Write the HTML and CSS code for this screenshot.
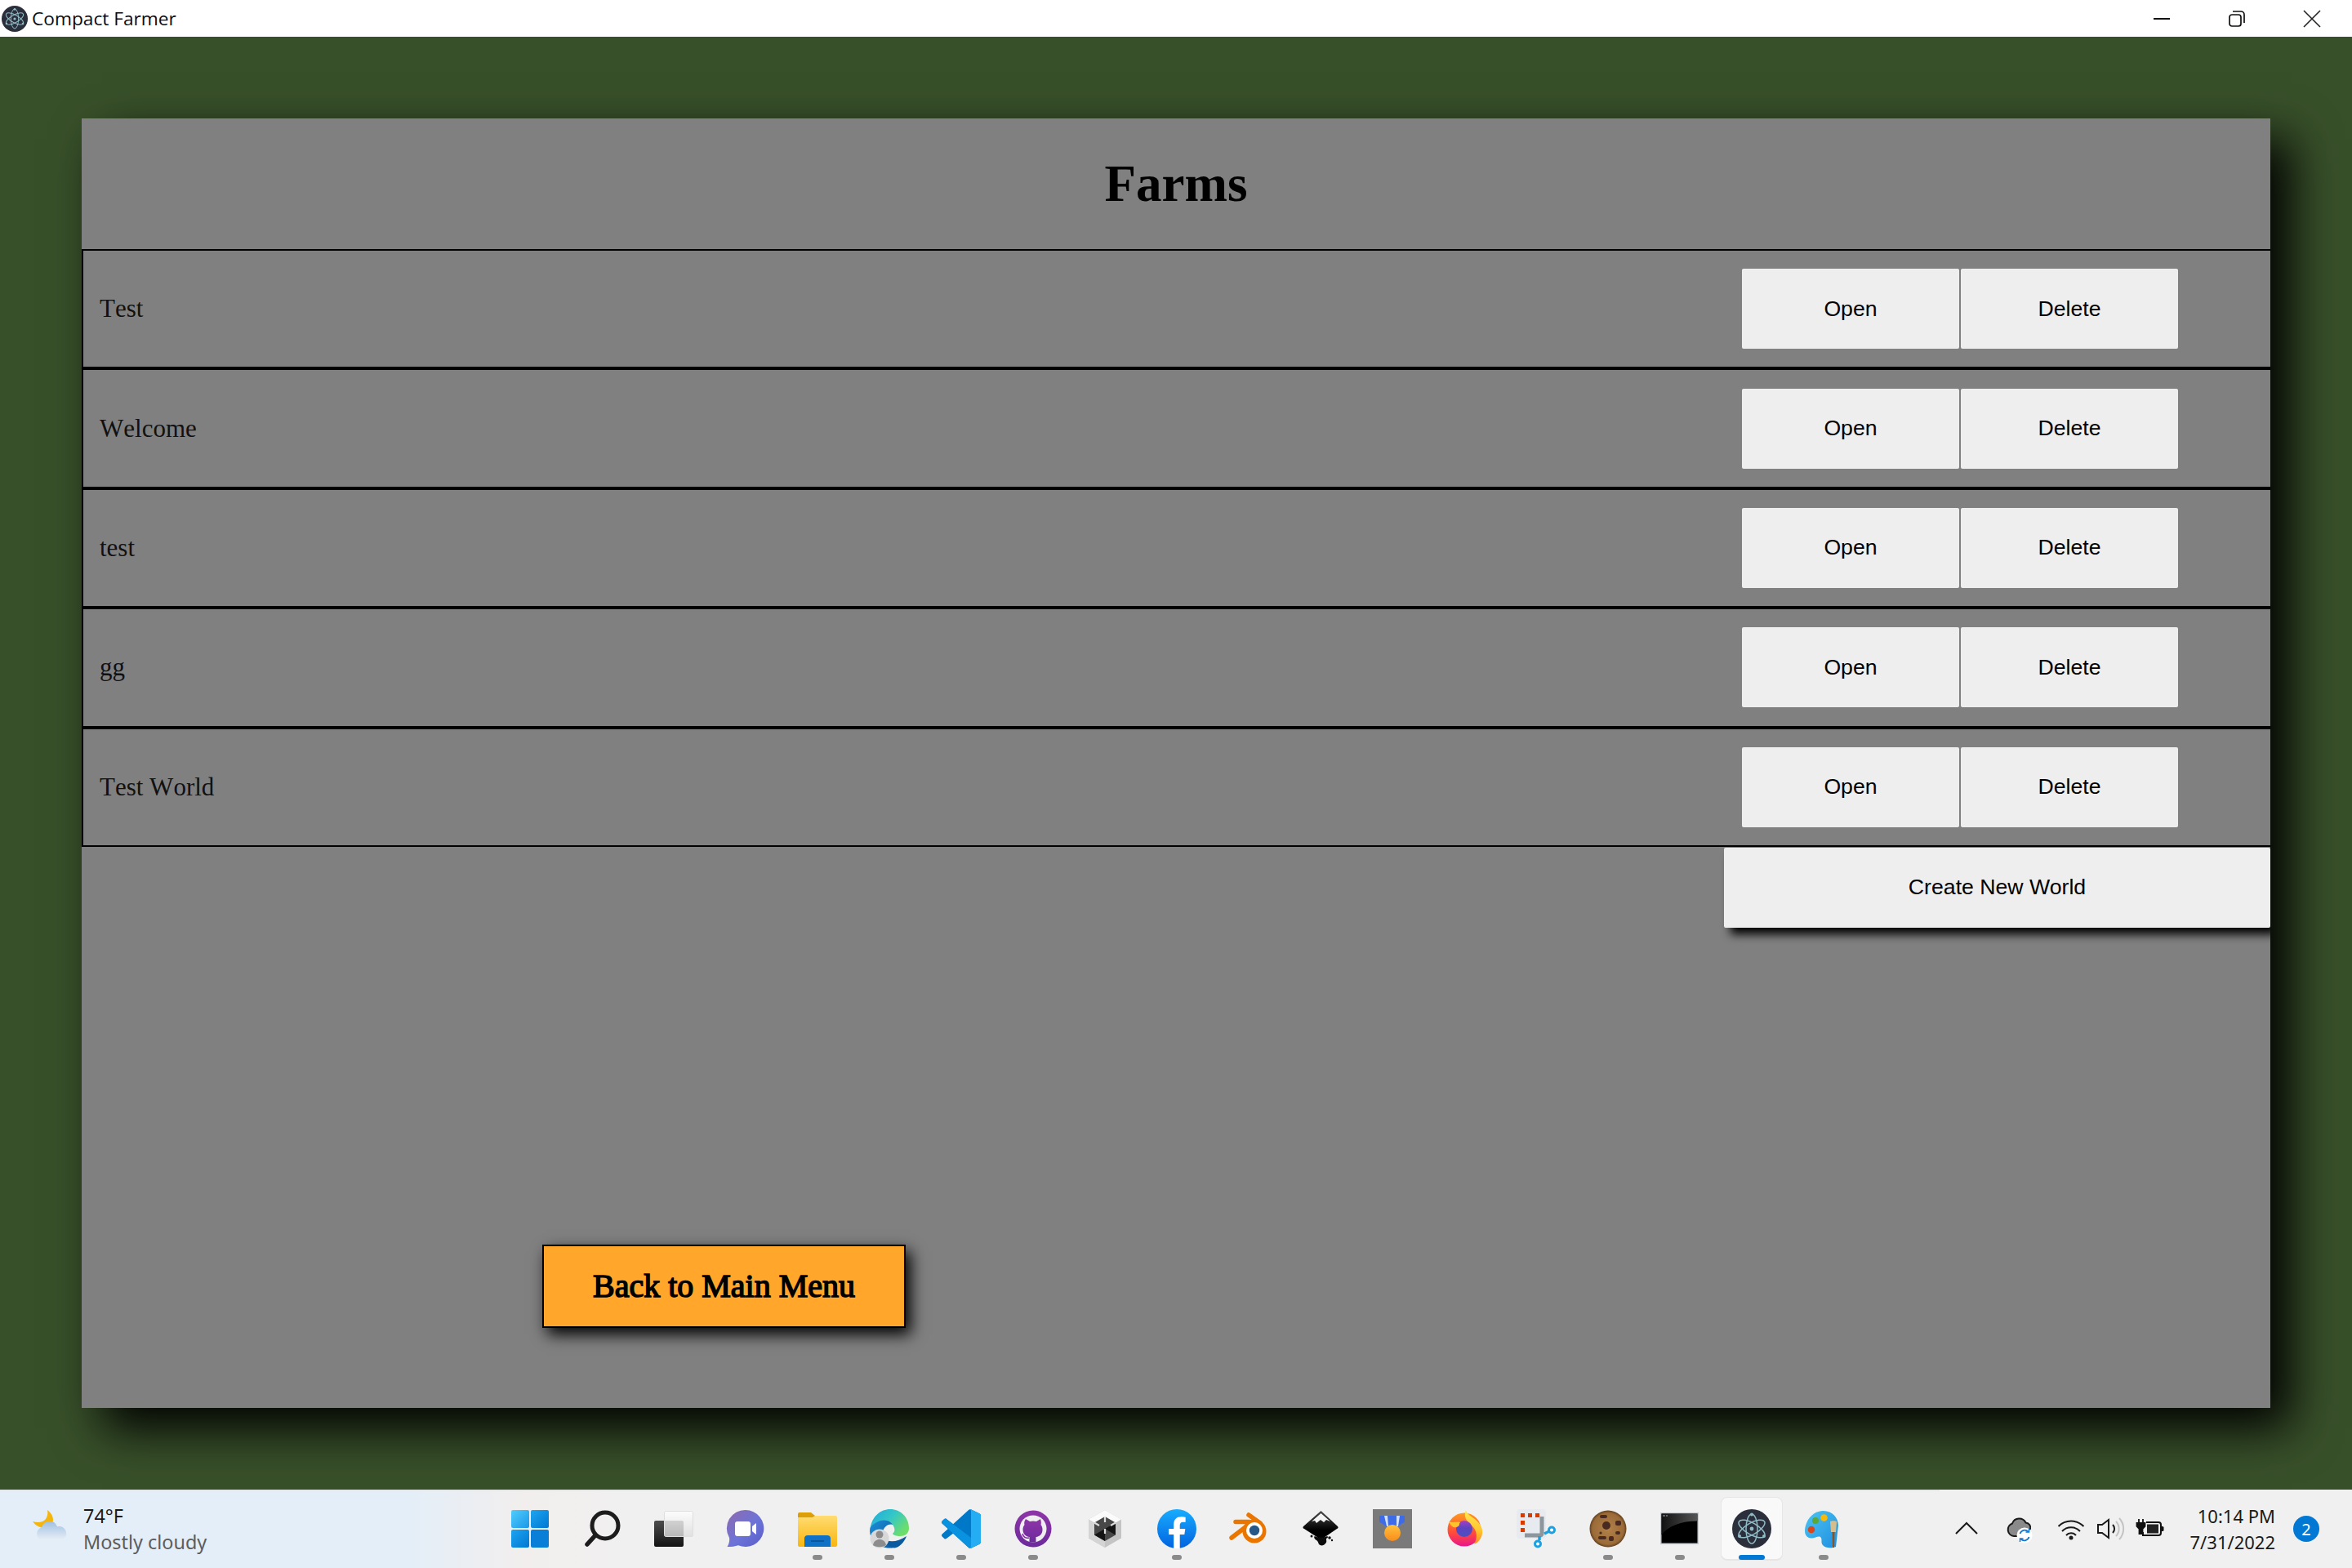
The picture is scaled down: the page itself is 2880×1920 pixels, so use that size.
FILE: index.html
```html
<!DOCTYPE html>
<html lang="en">
<head>
  <meta charset="UTF-8">
  <title>Compact Farmer</title>
  <link rel="stylesheet" href="styles.css">
</head>
<body>

  <svg class="defs" width="0" height="0">
    <defs>
      <symbol id="electron" viewBox="0 0 48 48">
        <circle cx="24" cy="24" r="24" fill="#2b2e3b"/>
        <g fill="none" stroke="#8fbcc6" stroke-width="1.500">
          <ellipse cx="24" cy="24" rx="18" ry="7" transform="rotate(30 24 24)"/>
          <ellipse cx="24" cy="24" rx="18" ry="7" transform="rotate(90 24 24)"/>
          <ellipse cx="24" cy="24" rx="18" ry="7" transform="rotate(150 24 24)"/>
        </g>
        <circle cx="24" cy="24" r="2.400" fill="#8fbcc6"/>
        <circle cx="24" cy="6.500" r="2" fill="#8fbcc6"/>
        <circle cx="9" cy="33" r="2" fill="#8fbcc6"/>
        <circle cx="39" cy="33" r="2" fill="#8fbcc6"/>
      </symbol>
      <linearGradient id="winA" x1="0" y1="0" x2="1" y2="1"><stop offset="0" stop-color="#52cdfd"/><stop offset="1" stop-color="#1a98e8"/></linearGradient>
      <linearGradient id="winB" x1="0" y1="0" x2="1" y2="1"><stop offset="0" stop-color="#1ea5ee"/><stop offset="1" stop-color="#0078d4"/></linearGradient>
      <linearGradient id="tv" x1="0" y1="0" x2="0" y2="1"><stop offset="0" stop-color="#4d4d4d"/><stop offset="1" stop-color="#141414"/></linearGradient>
      <linearGradient id="tvTop" x1="0" y1="0" x2="0" y2="1"><stop offset="0" stop-color="#fff"/><stop offset="1" stop-color="#dcdcdc"/></linearGradient>
      <linearGradient id="chat" x1="0" y1="0" x2="1" y2="1"><stop offset="0" stop-color="#8f6aad"/><stop offset=".55" stop-color="#6c74d8"/><stop offset="1" stop-color="#5a5cc8"/></linearGradient>
      <linearGradient id="fold" x1="0" y1="0" x2="0" y2="1"><stop offset="0" stop-color="#ffdc72"/><stop offset="1" stop-color="#f8b60e"/></linearGradient>
      <linearGradient id="edgeA" x1="0" y1="0" x2="1" y2=".6"><stop offset="0" stop-color="#1fa8e0"/><stop offset=".55" stop-color="#36c8c4"/><stop offset="1" stop-color="#6ede6a"/></linearGradient>
      <linearGradient id="edgeB" x1="0" y1="0" x2="1" y2="1"><stop offset="0" stop-color="#1b8fd8"/><stop offset="1" stop-color="#0b5aa0"/></linearGradient>
      <linearGradient id="gh" x1="0" y1="0" x2="0" y2="1"><stop offset="0" stop-color="#8e35a8"/><stop offset="1" stop-color="#6c2a9c"/></linearGradient>
      <linearGradient id="fb" x1="0" y1="0" x2="0" y2="1"><stop offset="0" stop-color="#18acfe"/><stop offset="1" stop-color="#0163e0"/></linearGradient>
      <linearGradient id="ink" x1="0" y1="0" x2="0" y2="1"><stop offset="0" stop-color="#4a4a4a"/><stop offset=".7" stop-color="#000"/></linearGradient>
      <linearGradient id="medal" x1="0" y1="0" x2="0" y2="1"><stop offset="0" stop-color="#ffc23d"/><stop offset="1" stop-color="#fa8c1a"/></linearGradient>
      <linearGradient id="fox" x1="0" y1="0" x2="0" y2="1"><stop offset="0" stop-color="#ff9a1f"/><stop offset=".6" stop-color="#ff4a3a"/><stop offset="1" stop-color="#e8148c"/></linearGradient>
      <linearGradient id="flame" x1="0" y1="0" x2="0" y2="1"><stop offset="0" stop-color="#ffe84f"/><stop offset=".6" stop-color="#ffc52e"/><stop offset="1" stop-color="#ff8a1f"/></linearGradient>
      <linearGradient id="globe" x1="0" y1="0" x2="0" y2="1"><stop offset="0" stop-color="#a83dc4"/><stop offset=".45" stop-color="#5b45c0"/><stop offset="1" stop-color="#4f4fc0"/></linearGradient>
      <radialGradient id="cookie"><stop offset="0" stop-color="#b3824a"/><stop offset=".85" stop-color="#9a6a38"/><stop offset="1" stop-color="#63401f"/></radialGradient>
      <linearGradient id="term" x1="0" y1="0" x2="1" y2="0"><stop offset="0" stop-color="#111"/><stop offset="1" stop-color="#555"/></linearGradient>
      <linearGradient id="cloud" x1="0" y1="0" x2="0" y2="1"><stop offset="0" stop-color="#9fc0e2"/><stop offset="1" stop-color="#e9eff6"/></linearGradient>
      <linearGradient id="pal" x1="0" y1="0" x2="1" y2="1"><stop offset="0" stop-color="#4cc4f2"/><stop offset="1" stop-color="#1f8fe0"/></linearGradient>
    </defs>
  </svg>

  <header class="titlebar">
    <svg class="app-icon"><use href="#electron"/></svg>
    <span class="app-name">Compact Farmer</span>
    <div class="window-controls">
      <svg viewBox="0 0 20 20"><path d="M0 10h20" stroke="#111" stroke-width="2"/></svg>
      <svg viewBox="0 0 20 20" fill="none" stroke="#111" stroke-width="1.700"><rect x="1" y="5" width="14" height="14" rx="3"/><path d="M5 1h10a4 4 0 0 1 4 4v10"/></svg>
      <svg viewBox="0 0 20 20"><path d="M0 0l20 20M20 0L0 20" stroke="#222" stroke-width="1.600"/></svg>
    </div>
  </header>

  <main class="stage">
    <section class="panel">
      <h1 class="panel-title">Farms</h1>

      <div class="farm-row">
        <span class="farm-name">Test</span>
        <div class="farm-actions"><button class="btn">Open</button><button class="btn">Delete</button></div>
      </div>
      <div class="farm-row">
        <span class="farm-name">Welcome</span>
        <div class="farm-actions"><button class="btn">Open</button><button class="btn">Delete</button></div>
      </div>
      <div class="farm-row">
        <span class="farm-name">test</span>
        <div class="farm-actions"><button class="btn">Open</button><button class="btn">Delete</button></div>
      </div>
      <div class="farm-row">
        <span class="farm-name">gg</span>
        <div class="farm-actions"><button class="btn">Open</button><button class="btn">Delete</button></div>
      </div>
      <div class="farm-row">
        <span class="farm-name">Test World</span>
        <div class="farm-actions"><button class="btn">Open</button><button class="btn">Delete</button></div>
      </div>

      <button class="btn create-btn">Create New World</button>
      <button class="back-btn">Back to Main Menu</button>
    </section>
  </main>

  <footer class="taskbar">
    <div class="weather">
      <svg class="weather-icon" viewBox="0 0 48 48">
        <path d="M20 1C27 6 29 14 25 19C20 25 8 24 2 15C9 17 15 16 18 12C20 9 21 5 20 1z" fill="#f5b50f"/>
        <path d="M15 38a8 8 0 0 1-2-15.700a10 10 0 0 1 19-1a8.500 8.500 0 0 1 5 16.700z" fill="url(#cloud)"/>
      </svg>
      <div class="weather-text">
        <span class="weather-temp">74°F</span>
        <span class="weather-desc">Mostly cloudy</span>
      </div>
    </div>

    <div class="tasks">
      <div class="task">
        <svg viewBox="0 0 48 48"><rect x="1" y="1" width="22" height="22" rx="2" fill="url(#winA)"/><rect x="25" y="1" width="22" height="22" rx="2" fill="url(#winB)"/><rect x="1" y="25" width="22" height="22" rx="2" fill="url(#winB)"/><rect x="25" y="25" width="22" height="22" rx="2" fill="#0a7fd8"/></svg>
      </div>
      <div class="task">
        <svg viewBox="0 0 48 48" fill="none" stroke="#1c1c1c"><circle cx="28" cy="20" r="16" stroke-width="5"/><path d="M16 32L6 43" stroke-width="5.500" stroke-linecap="round"/></svg>
      </div>
      <div class="task">
        <svg viewBox="0 0 48 48"><rect x="0" y="14" width="36" height="32" rx="2" fill="url(#tv)"/><rect x="12.500" y="2.500" width="35" height="31" rx="2" fill="url(#tvTop)" fill-opacity=".8" stroke="#dedede"/></svg>
      </div>
      <div class="task">
        <svg viewBox="0 0 48 48"><path d="M24 1a22.500 22.500 0 1 1-9 43.200C11 45.500 7 46 1.500 46 4 42 4.500 38 4 35A22.500 22.500 0 0 1 24 1z" fill="url(#chat)"/><rect x="11" y="15" width="19" height="18" rx="3" fill="#fff"/><path d="M32 21l5-4v14l-5-4z" fill="#fff"/></svg>
      </div>
      <div class="task has-dot">
        <svg viewBox="0 0 48 48"><path d="M0 6a2 2 0 0 1 2-2h14l5 4v4H0z" fill="#dc9f08"/><path d="M0 10h18l3-2h25a2 2 0 0 1 2 2v34a2 2 0 0 1-2 2H2a2 2 0 0 1-2-2z" fill="url(#fold)"/><path d="M8 35a4 4 0 0 1 4-3h24a4 4 0 0 1 4 3v11H8z" fill="#0f71c6"/><path d="M16 39h16" stroke="#0a4c8e" stroke-width="1.500"/></svg>
      </div>
      <div class="task has-dot">
        <svg viewBox="0 0 48 48"><path d="M0 26C0 18 8 12 16 12C22 12 27 15 29 19C24 17 18 20 16 27C15 35 20 43 30 47C14 50 0 40 0 26z" fill="url(#edgeB)"/><path d="M30 47.500C22 45 17 40 16 35C22 41 33 41 45 33C42 41 36 47 30 47.500z" fill="#0b5aa0"/><path d="M1 22C3 9 13 0 25 0C38 0 48 10 48 23C48 30 43 33 37 33C33 33 29 32 28 30C30 28 31 26 30 23C28 15 20 12 13 14C7 16 3 19 1 22z" fill="url(#edgeA)"/><circle cx="12" cy="36" r="11.500" fill="#d8d8d8"/><circle cx="12" cy="31" r="4.500" fill="#8c8c8c"/><path d="M4 44c1-5 4-7 8-7s7 2 8 7c-4 3-12 3-16 0z" fill="#8c8c8c"/></svg>
      </div>
      <div class="task has-dot">
        <svg viewBox="0 0 100 100"><path d="M70.912 99.317c1.575.614 3.371.575 4.960-.191l20.589-9.906c2.163-1.041 3.539-3.231 3.539-5.633V16.413c0-2.402-1.376-4.591-3.539-5.632L75.872.874c-2.086-1.004-4.528-.758-6.359.573-.261.190-.510.402-.744.636L29.355 38.042 12.187 25.010c-1.598-1.213-3.833-1.114-5.318.236L1.363 30.255c-1.816 1.651-1.818 4.508-.004 6.162L16.247 50 1.359 63.583c-1.814 1.654-1.812 4.511.004 6.162l5.506 5.009c1.485 1.350 3.720 1.449 5.318.236l17.168-13.032 39.414 35.958c.624.624 1.356 1.094 2.143 1.401zM75.015 27.299L45.109 50l29.906 22.701V27.299z" fill="#0078c8"/><path d="M96.461 89.204L75.857 99.125c-2.385 1.148-5.235.663-7.107-1.208L1.299 36.417c-1.815-1.654-1.813-4.511.004-6.162l5.510-5.009c1.485-1.350 3.722-1.449 5.321-.236l81.227 61.621c2.725 2.067 6.639.123 6.639-3.298v.239c0 2.401-1.375 4.590-3.539 5.632z" fill="#0892e0"/><path d="M75.858 99.126c-2.386 1.148-5.236.663-7.108-1.209 2.306 2.306 6.250.672 6.250-2.589V4.672c0-3.262-3.944-4.895-6.250-2.589 1.872-1.872 4.722-2.357 7.108-1.209l20.601 9.907c2.165 1.041 3.541 3.230 3.541 5.632v67.174c0 2.402-1.376 4.591-3.541 5.633z" fill="#24adf3"/></svg>
      </div>
      <div class="task has-dot">
        <svg viewBox="0 0 48 48"><circle cx="24" cy="24" r="22.500" fill="url(#gh)"/><circle cx="24" cy="24" r="16.500" fill="#efefef"/><path d="M15 12l5 3a17 17 0 0 1 8 0l5-3c1 3 1 5 .5 7 1.500 2 2 4 2 6 0 6-4 8.500-8 9v6.500h-8V34c-4-.5-8-3-8-9 0-2 .5-4 2-6-.5-2-.5-4 1.500-7z" fill="url(#gh)"/><path d="M11 30c1 4 4 6 8 5" fill="none" stroke="#8030a4" stroke-width="1.600"/></svg>
      </div>
      <div class="task">
        <svg viewBox="0 0 48 48"><path d="M24 1l20 11.500v23L24 47 4 35.500v-23z" fill="#c4c4c4"/><path d="M24 1l20 11.500L24 24 4 12.500z" fill="#fbfbfb"/><path d="M4 12.500L24 24v23L4 35.500z" fill="#d4d4d4"/><path d="M24 9l13 7.500v15L24 39l-13-7.500v-15z" fill="#474747"/><path d="M24 24l13-7.500v15zM24 24v15l-13-7.500z" fill="#141414"/><path d="M24 9v7M11 16.500l6 3.500M37 16.500l-6 3.500M24 24v6" stroke="#dcdcdc" stroke-width="2.200"/></svg>
      </div>
      <div class="task has-dot">
        <svg viewBox="0 0 48 48"><circle cx="24" cy="24" r="24" fill="url(#fb)"/><path d="M33.300 31l1.060-7H27.700v-4.500c0-1.900.93-3.800 3.940-3.800h3.030V9.800s-2.750-.47-5.380-.47c-5.490 0-9.080 3.330-9.080 9.350V24h-6.100v7h6.100v17h7.500V31z" fill="#fff"/></svg>
      </div>
      <div class="task">
        <svg viewBox="0 0 48 48"><g stroke="#ea7600" stroke-width="5.500" stroke-linecap="round" fill="none"><path d="M3 35l17-13"/><path d="M8 15.500h17"/><path d="M24 7l14 10"/></g><circle cx="31" cy="27" r="14.500" fill="#ea7600"/><circle cx="31" cy="26" r="10" fill="#fff"/><circle cx="31" cy="26" r="6.200" fill="#265787"/></svg>
      </div>
      <div class="task">
        <svg viewBox="0 0 48 48"><path d="M24.500 2L45 21q1.500 2-1 3L28 35q-3.500 2-7 0L4 24q-2.500-1-1-3z" fill="url(#ink)"/><path d="M24.500 5L36 15l-5-2-3 3-4-3-5 4-2-3-4 1z" fill="#f4f4f4"/><path d="M17 33c3 2 11 2 15 0 2 1 1 2-1 3 0 3 1 4-1 6-2 3-6 3-8 1-1-2-1-4-3-5-2-1-4-4-2-5z" fill="#0c0c0c"/><circle cx="35" cy="35" r="1.800" fill="#111"/><circle cx="38" cy="38" r="1.200" fill="#111"/><circle cx="13" cy="33" r="1.500" fill="#111"/></svg>
      </div>
      <div class="task">
        <svg viewBox="0 0 48 48"><rect width="48" height="48" fill="#7a7a7a"/><path d="M8 8h31v6c0 2-1 3-3 3l-6 5H17l-6-5c-2 0-3-1-3-3z" fill="#3e6be8"/><path d="M14 8h4l1 13h-2zM29 8h4l-2 13h-2z" fill="#cfe0ff"/><circle cx="24" cy="29" r="10" fill="url(#medal)"/></svg>
      </div>
      <div class="task">
        <svg viewBox="0 0 48 48"><circle cx="24" cy="25" r="20.500" fill="url(#fox)"/><path d="M26 1C27 6 33 9 38 13C44 18 47 24 46 30C45 36 41 41 36 43C40 36 40 28 35 22C30 17 22 12 26 1z" fill="url(#flame)"/><circle cx="24" cy="24" r="10" fill="url(#globe)"/><path d="M5 15C10 17 14 15 19 16C17 19 19 21 14 22C10 23 7 20 5 15z" fill="#ffc22e"/></svg>
      </div>
      <div class="task">
        <svg viewBox="0 0 48 48"><rect width="36" height="36" rx="4" fill="#e7ebef"/><g fill="#d83b01"><rect x="5" y="5" width="5" height="5"/><rect x="14" y="5" width="5" height="5"/><rect x="23" y="5" width="5" height="5"/><rect x="5" y="14" width="5" height="5"/><rect x="5" y="23" width="5" height="5"/></g><path d="M31 9v21a2 2 0 0 1-2 2H10" fill="none" stroke="#8e969d" stroke-width="5"/><path d="M34 30l6-3M28 33v5" stroke="#1ba1e2" stroke-width="3.500"/><circle cx="43" cy="25.500" r="3.500" fill="#fff" stroke="#1ba1e2" stroke-width="3"/><circle cx="26" cy="42.500" r="3.500" fill="#fff" stroke="#1ba1e2" stroke-width="3"/></svg>
      </div>
      <div class="task has-dot">
        <svg viewBox="0 0 48 48"><circle cx="24" cy="24" r="22.500" fill="url(#cookie)"/><g fill="#4a2a20"><circle cx="22" cy="20" r="5"/><rect x="33" y="14" width="7" height="6" rx="2"/><rect x="14" y="7" width="9" height="4" rx="2"/><rect x="25" y="33" width="6" height="6" rx="2"/><rect x="12" y="33" width="10" height="4" rx="2"/><rect x="33" y="27" width="6" height="4" rx="2"/><circle cx="15" cy="29" r="1.600"/></g></svg>
      </div>
      <div class="task has-dot">
        <svg viewBox="0 0 48 48"><rect y="4" width="47" height="39" fill="#c6cbd1"/><rect x="1.500" y="5.500" width="44" height="36" fill="#000"/><path d="M1.500 5.500h44v9c-20 0-36 6-44 17z" fill="url(#term)"/><path d="M3 8h3M7 8h2" stroke="#aaa"/></svg>
      </div>
      <div class="task active">
        <svg><use href="#electron"/></svg>
      </div>
      <div class="task has-dot">
        <svg viewBox="0 0 48 48"><path d="M22 2c12-1 20 8 20 18l-3 26c-5 2-13 2-16-2-3-3 0-8-3-10-3-2-8 3-14 1C1 33 0 27 2 20 5 10 12 3 22 2z" fill="url(#pal)"/><circle cx="14" cy="14" r="4" fill="#5aa83a"/><circle cx="24.500" cy="10.500" r="4.300" fill="#f5b90f"/><circle cx="9" cy="25" r="4.300" fill="#d8471c"/><path d="M32 15c1-1 7-1 8 0l-1 13h-6z" fill="#d6bd8c"/><path d="M34.500 28h3l-.5 19h-2z" fill="#8c5424"/></svg>
      </div>
    </div>

    <div class="tray">
      <svg class="tray-icon tray-wide" viewBox="0 0 48 48" fill="none"><path d="M11 30l13-13 13 13" stroke="#1a1a1a" stroke-width="2"/></svg>
      <svg class="tray-icon tray-wide" viewBox="0 0 48 48"><path d="M18 33a8 8 0 0 1-2-15.500 9 9 0 0 1 16.500-1C37 17 39 21 38 24c-3 5-6 9-10 9z" fill="#8a8a8a" stroke="#1a1a1a" stroke-width="2"/><circle cx="31" cy="32" r="9.500" fill="#fff"/><path d="M25.500 30a6 6 0 0 1 10-2.500M36.500 34a6 6 0 0 1-10 2.500" fill="none" stroke="#0f78d4" stroke-width="1.800"/><path d="M36.500 24v4h-4M25.500 40v-4h4" fill="none" stroke="#0f78d4" stroke-width="1.500"/></svg>
      <svg class="tray-icon" viewBox="0 0 48 48" fill="none" stroke="#1a1a1a" stroke-width="2"><path d="M8.500 21a22 22 0 0 1 31 0M13 27a15 15 0 0 1 22 0M18 32a8 8 0 0 1 12 0"/><circle cx="24" cy="35" r="2.500" fill="#1a1a1a" stroke="none"/></svg>
      <svg class="tray-icon" viewBox="0 0 48 48" fill="none"><path d="M9 19h5l8-6v22l-8-6H9z" stroke="#1a1a1a" stroke-width="2"/><path d="M27 19a7 7 0 0 1 0 10" stroke="#1a1a1a" stroke-width="2"/><path d="M31 15a13 13 0 0 1 0 18M35 11a19 19 0 0 1 0 26" stroke="#c4c4c4" stroke-width="2"/></svg>
      <svg class="tray-icon" viewBox="0 0 48 48"><path d="M11 12v5M16 12v5M8.500 17h10v4l-3 3v6h-4v-6l-3-3z" fill="#111" stroke="#111" stroke-width="1.800"/><path d="M20 16h15a3 3 0 0 1 3 3v10a3 3 0 0 1-3 3H16v-4" fill="none" stroke="#111" stroke-width="2"/><rect x="21" y="18.500" width="14" height="11" fill="#222"/><path d="M38 21h2a1.500 1.500 0 0 1 1.500 1.500v3A1.500 1.500 0 0 1 40 27h-2z" fill="#111"/></svg>
      <div class="clock">
        <span>10:14 PM</span>
        <span>7/31/2022</span>
      </div>
      <span class="badge">2</span>
    </div>
  </footer>

</body>
</html>
```

FILE: styles.css
```css
html, body {
  height: 100%;
}

body {
  margin: 0;
  display: flex;
  flex-direction: column;
  overflow: hidden;
  background: #38502a;
  font-family: "Liberation Serif", serif;
}

.defs {
  position: absolute;
}

/* window title bar */
.titlebar {
  height: 45px;
  flex: none;
  display: flex;
  align-items: center;
  background: #fff;
  padding: 0 39px 0 2px;
  font-family: "Open Sans", sans-serif;
}

.app-icon {
  width: 32px;
  height: 32px;
  margin-right: 5px;
}

.app-name {
  font-size: 22.7px;
  color: #0b0b14;
}

.window-controls {
  margin-left: auto;
  display: flex;
  gap: 72px;
}

.window-controls svg {
  width: 20px;
  height: 20px;
  overflow: visible;
}

/* app area */
.stage {
  flex: 1;
  min-height: 0;
  display: flex;
  padding: 100px;
}

.panel {
  flex: 1;
  display: flex;
  flex-direction: column;
  overflow: hidden;
  background: #808080;
  box-shadow: 25px 25px 55px #000;
  font-kerning: none;
}

.panel-title {
  height: 160px;
  flex: none;
  margin: 0;
  display: flex;
  align-items: center;
  justify-content: center;
  font-size: 63px;
  font-weight: bold;
  color: #000;
}

.farm-row {
  height: 146.4px;
  flex: none;
  box-sizing: border-box;
  display: flex;
  align-items: center;
  justify-content: space-between;
  border: 2px solid #000;
  border-right: 0;
  padding: 0 113px 0 20px;
}

.farm-name {
  font-size: 31px;
  color: #111;
}

.farm-actions {
  display: flex;
  gap: 2px;
}

.btn {
  width: 266px;
  height: 98px;
  border: 0;
  border-radius: 2px;
  padding: 0;
  background: #eee;
  color: #000;
  font-family: "Liberation Sans", sans-serif;
  font-size: 26.67px;
}

.create-btn {
  flex: none;
  width: 669px;
  margin: 1px 0 0 auto;
  box-shadow: 8px 8px 12px #000;
}

.back-btn {
  flex: none;
  align-self: flex-start;
  width: 445px;
  height: 102px;
  margin: 388px 0 0 564px;
  border: 2px solid #000;
  padding: 0;
  background: #ffa62b;
  color: #000;
  font-family: "Liberation Serif", serif;
  font-size: 40px;
  -webkit-text-stroke: 1.5px #000;
  box-shadow: 6px 8px 18px #000;
}

/* windows taskbar */
.taskbar {
  height: 96px;
  flex: none;
  display: flex;
  background:
    linear-gradient(#e6e7e7, #e6e7e7) no-repeat 0 0 / 2375px 2px,
    linear-gradient(90deg, #e3eef8 0, #e4eef8 500px, #f2eeee 640px, #f0f0f0 820px);
  font-family: "Noto Sans", sans-serif;
}

.weather {
  width: 605px;
  flex: none;
  display: flex;
  align-items: center;
}

.weather-icon {
  width: 48px;
  height: 48px;
  margin: 0 16px 0 38px;
}

.weather-text {
  display: flex;
  flex-direction: column;
  font-size: 23.4px;
  line-height: 32px;
  color: #1a1a1a;
}

.weather-desc {
  color: #5d5d5d;
}

.tasks {
  display: flex;
}

.task {
  position: relative;
  width: 88px;
  display: flex;
  align-items: center;
  justify-content: center;
}

.task svg {
  width: 48px;
  height: 48px;
}

.task.has-dot::after {
  content: "";
  position: absolute;
  left: 38px;
  bottom: 10px;
  width: 12px;
  height: 6px;
  border-radius: 3px;
  background: #8a8a8a;
}

.task.active::before {
  content: "";
  position: absolute;
  left: 6px;
  top: 9px;
  width: 76px;
  height: 78px;
  box-sizing: border-box;
  border-radius: 8px;
  border: 1px solid #e6e6e6;
  border-bottom-width: 2px;
  background: #f9f9f9;
}

.task.active svg {
  position: relative;
}

.task.active::after {
  content: "";
  position: absolute;
  left: 28px;
  bottom: 10px;
  width: 32px;
  height: 6px;
  border-radius: 3px;
  background: #0078d4;
}

.tray {
  margin-left: auto;
  display: flex;
  align-items: center;
  padding-right: 40px;
}

.tray-icon {
  width: 48px;
  height: 48px;
}

.tray-wide {
  margin-right: 16px;
}

.clock {
  width: 130px;
  display: flex;
  flex-direction: column;
  align-items: flex-end;
  margin-right: 22px;
  font-size: 22px;
  line-height: 32px;
  color: #1a1a1a;
}

.badge {
  width: 32px;
  height: 32px;
  border-radius: 50%;
  display: flex;
  align-items: center;
  justify-content: center;
  background: #0078d4;
  color: #fff;
  font-size: 20px;
}
```
